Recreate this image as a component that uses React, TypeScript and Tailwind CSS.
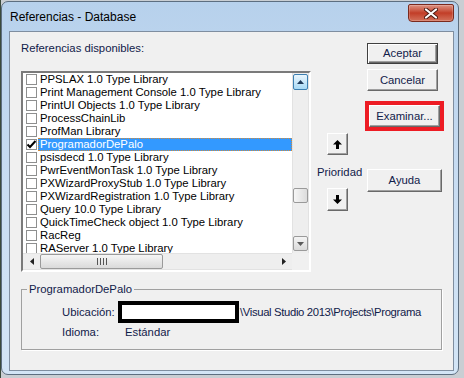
import React from "react";

const items: { name: string; checked?: boolean; selected?: boolean }[] = [
  { name: "PPSLAX 1.0 Type Library" },
  { name: "Print Management Console 1.0 Type Library" },
  { name: "PrintUI Objects 1.0 Type Library" },
  { name: "ProcessChainLib" },
  { name: "ProfMan Library" },
  { name: "ProgramadorDePalo", checked: true, selected: true },
  { name: "psisdecd 1.0 Type Library" },
  { name: "PwrEventMonTask 1.0 Type Library" },
  { name: "PXWizardProxyStub 1.0 Type Library" },
  { name: "PXWizardRegistration 1.0 Type Library" },
  { name: "Query 10.0 Type Library" },
  { name: "QuickTimeCheck object 1.0 Type Library" },
  { name: "RacReg" },
  { name: "RAServer 1.0 Type Library" },
];

function Btn({ label, def, w, h }: { label: string; def?: boolean; w: string; h: string }) {
  return (
    <div
      className={
        "flex items-center justify-center bg-[#f0f0f0] text-[#10204a] " +
        w +
        " " +
        h +
        " " +
        (def
          ? "border border-[#404040] shadow-[inset_1px_1px_0_#ffffff,inset_-1px_-1px_0_#696969,inset_-2px_-2px_0_#a0a0a0]"
          : "border-t border-l border-t-white border-l-white border-b border-r border-b-[#696969] border-r-[#696969] shadow-[inset_-1px_-1px_0_#a0a0a0]")
      }
    >
      {label}
    </div>
  );
}

function ArrowBtn({ up, h }: { up?: boolean; h: string }) {
  return (
    <div
      className={
        "ml-[16px] w-[21px] flex items-center justify-center bg-[#f0f0f0] border-t border-l border-t-white border-l-white border-b border-r border-b-[#696969] border-r-[#696969] shadow-[inset_-1px_-1px_0_#a0a0a0] " +
        h
      }
    >
      <svg width="9" height="9" viewBox="0 0 9 9" className={up ? "" : "rotate-180"}>
        <path d="M4.5 0 L9 4.5 L6 4.5 L6 9 L3 9 L3 4.5 L0 4.5 Z" fill="#000" />
      </svg>
    </div>
  );
}

function Check({ checked }: { checked?: boolean }) {
  return (
    <div className="ml-[3px] w-[11px] h-[11px] shrink-0 bg-white border border-[#8e8f8f] flex items-center justify-center">
      {checked && (
        <svg width="9" height="9" viewBox="0 0 9 9">
          <path d="M0.5 4.5 L3 7 L8.5 1" stroke="#000" strokeWidth="2" fill="none" />
        </svg>
      )}
    </div>
  );
}

export default function App() {
  return (
    <div
      className="w-[464px] h-[378px] bg-[#c9ced3] overflow-hidden border-l border-l-[#3b4a3c]"
      style={{ fontFamily: '"Liberation Sans", Arial, sans-serif' }}
    >
      <div className="mt-[1px] w-[458px] h-[374px] rounded-[7px] border border-[#5d6e80] bg-gradient-to-b from-[#b7d1ec] via-[#c9ddf2] to-[#d3e5f6] flex flex-col">
        {/* title bar */}
        <div className="h-[29px] flex items-start">
          <div className="mt-[8px] ml-[8px] text-[12px] leading-[15px] text-black">Referencias - Database</div>
          <div className="ml-auto mr-[4px] mt-[2px] w-[46px] h-[18px] rounded-b-[4px] rounded-t-[2px] border border-[#7a2a1e] bg-gradient-to-b from-[#dc9282] via-[#c23d27] to-[#d2705a] flex items-center justify-center shadow-[inset_0_0_0_1px_rgba(255,255,255,0.2)]">
            <svg width="14" height="11" viewBox="0 0 14 11">
              <path d="M2 1.5 L12 9.5 M12 1.5 L2 9.5" stroke="#4a1a12" strokeWidth="4" strokeLinecap="round" />
              <path d="M2 1.5 L12 9.5 M12 1.5 L2 9.5" stroke="#ffffff" strokeWidth="2.2" strokeLinecap="round" />
            </svg>
          </div>
        </div>

        {/* client area */}
        <div className="ml-[7px] w-[445px] h-[340px] border border-[#7f8ea0] bg-[#f0f0f0] flex flex-col text-[11.3px] leading-[13px]">
          <div className="flex">
            {/* left column */}
            <div className="ml-[11px] w-[290px] flex flex-col">
              <div className="mt-[10px] h-[13px] text-[#10204a]">Referencias disponibles:</div>
              <div className="mt-[16px] h-[201px] border-2 border-t-[#7a7a7a] border-l-[#7a7a7a] border-b-white border-r-white bg-white flex flex-col">
                <div className="flex h-[180px]">
                  <div className="flex-1 overflow-hidden flex flex-col">
                    {items.map((it) => (
                      <div key={it.name} className="h-[13px] shrink-0 flex items-center">
                        <Check checked={it.checked} />
                        <div
                          className={
                            "ml-[1px] h-[13px] flex-1 pl-[1px] whitespace-nowrap flex items-center " +
                            (it.selected
                              ? "bg-[#3399ff] text-white border border-dotted border-[#d08a3a]"
                              : "text-black border border-transparent")
                          }
                        >
                          {it.name}
                        </div>
                      </div>
                    ))}
                  </div>
                  {/* vertical scrollbar */}
                  <div className="w-[17px] bg-[#eeeeee] border-l border-r border-l-[#e2e2e2] border-r-[#e2e2e2] flex flex-col items-center">
                    <div className="mt-[1px] w-[15px] h-[16px] rounded-[2px] border border-[#3c7fb1] bg-gradient-to-b from-[#eaf6fd] to-[#a7d9f5] flex items-center justify-center">
                      <svg width="7" height="4" viewBox="0 0 7 4">
                        <path d="M3.5 0 L7 4 L0 4 Z" fill="#1f3a5a" />
                      </svg>
                    </div>
                    <div className="mt-[98px] w-[15px] h-[15px] rounded-[2px] border border-[#9a9a9a] bg-gradient-to-r from-[#f6f6f6] to-[#dcdcdc]" />
                    <div className="flex-1" />
                    <div className="mb-[2px] w-[15px] h-[15px] rounded-[2px] border border-[#9a9a9a] bg-gradient-to-b from-[#f4f4f4] to-[#dadada] flex items-center justify-center">
                      <svg width="7" height="4" viewBox="0 0 7 4">
                        <path d="M0 0 L7 0 L3.5 4 Z" fill="#5a5a5a" />
                      </svg>
                    </div>
                  </div>
                </div>
                {/* horizontal scrollbar */}
                <div className="flex h-[17px]">
                  <div className="flex-1 bg-[#eeeeee] border-t border-b border-t-[#e2e2e2] border-b-[#e2e2e2] flex items-center">
                    <div className="w-[17px] flex items-center justify-center">
                      <svg width="4" height="7" viewBox="0 0 4 7">
                        <path d="M4 0 L4 7 L0 3.5 Z" fill="#222" />
                      </svg>
                    </div>
                    <div className="w-[123px] h-[15px] rounded-[2px] border border-[#9a9a9a] bg-gradient-to-b from-[#f6f6f6] to-[#dadada] flex items-center justify-center">
                      <div className="flex gap-[2px]">
                        <div className="w-[1px] h-[7px] bg-[#555]" />
                        <div className="w-[1px] h-[7px] bg-[#555]" />
                        <div className="w-[1px] h-[7px] bg-[#555]" />
                        <div className="w-[1px] h-[7px] bg-[#555]" />
                      </div>
                    </div>
                    <div className="flex-1" />
                    <div className="w-[17px] flex items-center justify-center">
                      <svg width="4" height="7" viewBox="0 0 4 7">
                        <path d="M0 0 L4 3.5 L0 7 Z" fill="#222" />
                      </svg>
                    </div>
                  </div>
                  <div className="w-[17px] bg-[#f0f0f0]" />
                </div>
              </div>
            </div>

            {/* middle column */}
            <div className="w-[56px] flex flex-col">
              <div className="mt-[101px]">
                <ArrowBtn up h="h-[22px]" />
              </div>
              <div className="mt-[11px] ml-[6px] h-[13px] text-[#10204a]">Prioridad</div>
              <div className="mt-[9px]">
                <ArrowBtn h="h-[23px]" />
              </div>
            </div>

            {/* right column */}
            <div className="flex flex-col">
              <div className="mt-[11px]">
                <Btn label="Aceptar" def w="w-[71px]" h="h-[21px]" />
              </div>
              <div className="mt-[5px]">
                <Btn label="Cancelar" w="w-[71px]" h="h-[22px]" />
              </div>
              <div className="mt-[10px] -ml-[2px] w-[79px] h-[30px] border-4 border-[#ed1c24]">
                <Btn label="Examinar..." w="w-[71px]" h="h-[22px]" />
              </div>
              <div className="mt-[38px]">
                <Btn label="Ayuda" w="w-[75px]" h="h-[23px]" />
              </div>
            </div>
          </div>

          {/* group box */}
          <fieldset className="mt-[11px] ml-[11px] w-[421px] h-[67px] border border-[#a0a0a0] shadow-[1px_1px_0_#ffffff]">
            <legend className="ml-[5px] px-[2px] text-[#10204a]">ProgramadorDePalo</legend>
            <div className="mt-[5px] h-[22px] flex items-center pl-[40px]">
              <div className="w-[56px] text-[#10204a]">Ubicación:</div>
              <div className="w-[121px] h-[22px] border-4 border-black bg-white" />
              <div className="ml-[1px] whitespace-nowrap text-[#10204a] tracking-[-0.35px]">\Visual Studio 2013\Projects\Programa</div>
            </div>
            <div className="mt-[3px] h-[13px] flex items-center pl-[40px]">
              <div className="w-[63px] text-[#10204a]">Idioma:</div>
              <div className="text-[#10204a]">Estándar</div>
            </div>
          </fieldset>
        </div>
      </div>
    </div>
  );
}
